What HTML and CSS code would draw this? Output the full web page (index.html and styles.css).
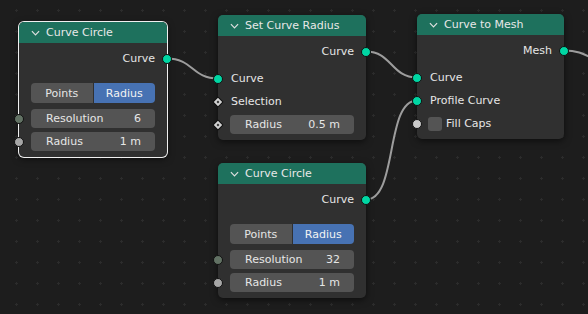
FILE: index.html
```html
<!DOCTYPE html>
<html lang="en">
<head>
<meta charset="UTF-8" />
<title>Geometry Nodes</title>
<link rel="stylesheet" href="styles.css">
</head>
<body>

<div class="editor">
    <!-- links between sockets -->
    <svg class="wires" width="588" height="314" viewBox="0 0 588 314">
        <path d="M167 58.5 C193 58.5 192 78.5 218 78.5" />
        <path d="M366 51.5 C392 51.5 391 77.5 417 77.5" />
        <path d="M366 199.5 C398 199.5 385 100.5 417 100.5" />
        <path d="M564 50.5 C580 50.5 585 55 600 62" />
    </svg>

    <!-- Curve Circle (selected) -->
    <div class="node node-circle-a selected">
        <div class="node-header">
            <svg class="chevron" viewBox="0 0 10 6"><polyline points="1,1 5,5 9,1" /></svg>
            <span>Curve Circle</span>
        </div>
        <div class="node-body">
            <div class="row row-out"><span>Curve</span><i class="socket socket-geo"></i></div>
            <div class="enum"><span>Points</span><span class="active">Radius</span></div>
            <div class="inputs">
                <div class="row"><i class="socket socket-int"></i><div class="field"><span>Resolution</span><span>6</span></div></div>
                <div class="row"><i class="socket socket-float"></i><div class="field"><span>Radius</span><span>1 m</span></div></div>
            </div>
        </div>
    </div>

    <!-- Set Curve Radius -->
    <div class="node node-radius">
        <div class="node-header">
            <svg class="chevron" viewBox="0 0 10 6"><polyline points="1,1 5,5 9,1" /></svg>
            <span>Set Curve Radius</span>
        </div>
        <div class="node-body">
            <div class="row row-out"><span>Curve</span><i class="socket socket-geo"></i></div>
            <div class="inputs">
                <div class="row row-label"><i class="socket socket-geo"></i><span>Curve</span></div>
                <div class="row row-label"><i class="socket socket-diamond"></i><span>Selection</span></div>
                <div class="row"><i class="socket socket-diamond"></i><div class="field"><span>Radius</span><span>0.5 m</span></div></div>
            </div>
        </div>
    </div>

    <!-- Curve to Mesh -->
    <div class="node node-mesh">
        <div class="node-header">
            <svg class="chevron" viewBox="0 0 10 6"><polyline points="1,1 5,5 9,1" /></svg>
            <span>Curve to Mesh</span>
        </div>
        <div class="node-body">
            <div class="row row-out"><span>Mesh</span><i class="socket socket-geo"></i></div>
            <div class="inputs">
                <div class="row row-label"><i class="socket socket-geo"></i><span>Curve</span></div>
                <div class="row row-label"><i class="socket socket-geo"></i><span>Profile Curve</span></div>
                <div class="row row-check"><i class="socket socket-bool"></i><b class="checkbox"></b><span>Fill Caps</span></div>
            </div>
        </div>
    </div>

    <!-- Curve Circle -->
    <div class="node node-circle-b">
        <div class="node-header">
            <svg class="chevron" viewBox="0 0 10 6"><polyline points="1,1 5,5 9,1" /></svg>
            <span>Curve Circle</span>
        </div>
        <div class="node-body">
            <div class="row row-out"><span>Curve</span><i class="socket socket-geo"></i></div>
            <div class="enum"><span>Points</span><span class="active">Radius</span></div>
            <div class="inputs">
                <div class="row"><i class="socket socket-int"></i><div class="field"><span>Resolution</span><span>32</span></div></div>
                <div class="row"><i class="socket socket-float"></i><div class="field"><span>Radius</span><span>1 m</span></div></div>
            </div>
        </div>
    </div>
</div>

</body>
</html>
```

FILE: styles.css
```css
body {
    margin: 0;
    padding: 0;
    background: #1d1d1d;
    font-family: "DejaVu Sans", "Liberation Sans", sans-serif;
    font-size: 11px;
    color: #e6e6e6;
}

.editor {
    position: relative;
    width: 588px;
    height: 314px;
    overflow: hidden;
    background-color: #1d1d1d;
    background-image: radial-gradient(circle, #2c2c2c 1px, transparent 1.3px);
    background-size: 21px 21px;
    background-position: 6px 0px;
}

.wires {
    position: absolute;
    left: 0;
    top: 0;
}

.wires path {
    fill: none;
    stroke: #9d9d9d;
    stroke-width: 2;
}

/* nodes sit on a free canvas */
.node {
    position: absolute;
    width: 148px;
    background: #303030;
    border-radius: 5px;
    box-shadow: 0 2px 7px rgba(0, 0, 0, 0.55);
}

.node.selected {
    box-shadow: 0 0 0 1px #f0f0f0, 0 2px 7px rgba(0, 0, 0, 0.55);
}

.node-circle-a { left: 19px; top: 22px; }
.node-radius   { left: 218px; top: 15px; }
.node-mesh     { left: 417px; top: 14px; width: 147px; }
.node-circle-b { left: 218px; top: 163px; }

.node-header {
    height: 21px;
    display: flex;
    align-items: center;
    gap: 6px;
    padding-left: 12px;
    background: #1e715d;
    border-radius: 5px 5px 0 0;
    color: #e8e8e8;
}

.chevron {
    width: 9px;
    height: 6px;
    margin-top: 1px;
}

.chevron polyline {
    fill: none;
    stroke: #e0e0e0;
    stroke-width: 1.3;
}

.node-body {
    padding: 4px 0 4px;
}

.row {
    position: relative;
    height: 23px;
    display: flex;
    align-items: center;
}

.row-out {
    justify-content: flex-end;
    padding-right: 12px;
}

.row-label {
    padding-left: 13px;
}

.inputs {
    margin-top: 4px;
}

/* sockets */
.socket {
    position: absolute;
    top: 50%;
    width: 10px;
    height: 10px;
    margin-top: -5px;
    border-radius: 50%;
    box-sizing: border-box;
    border: 1px solid #111;
    left: -5px;
}

.row-out .socket {
    left: auto;
    right: -5px;
}

.socket-geo   { background: #00d6a3; }
.socket-int   { background: #627264; }
.socket-float { background: #a6a6a6; }
.socket-bool  { background: #cacaca; }

.socket-diamond {
    width: 8px;
    height: 8px;
    margin-top: -4px;
    left: -4px;
    border-radius: 1px;
    background: #d2d2d2;
    transform: rotate(45deg);
}

.socket-diamond::after {
    content: "";
    position: absolute;
    left: 2px;
    top: 2px;
    width: 2px;
    height: 2px;
    background: #2a2a2a;
}

/* widgets */
.enum {
    display: flex;
    gap: 1px;
    height: 20px;
    margin: 13px 12px 0;
}

.enum span {
    flex: 1;
    display: flex;
    align-items: center;
    justify-content: center;
    background: #545454;
}

.enum span:first-child { border-radius: 4px 0 0 4px; }
.enum span:last-child  { border-radius: 0 4px 4px 0; }

.enum .active {
    background: #4772b3;
    color: #f2f2f2;
}

.field {
    flex: 1;
    height: 19px;
    margin: 0 12px;
    padding: 0 14px 0 15px;
    display: flex;
    align-items: center;
    justify-content: space-between;
    background: #545454;
    border-radius: 4px;
}

.row-check {
    padding-left: 11px;
    gap: 4px;
}

.checkbox {
    width: 14px;
    height: 14px;
    border-radius: 3px;
    background: #545454;
}
```
